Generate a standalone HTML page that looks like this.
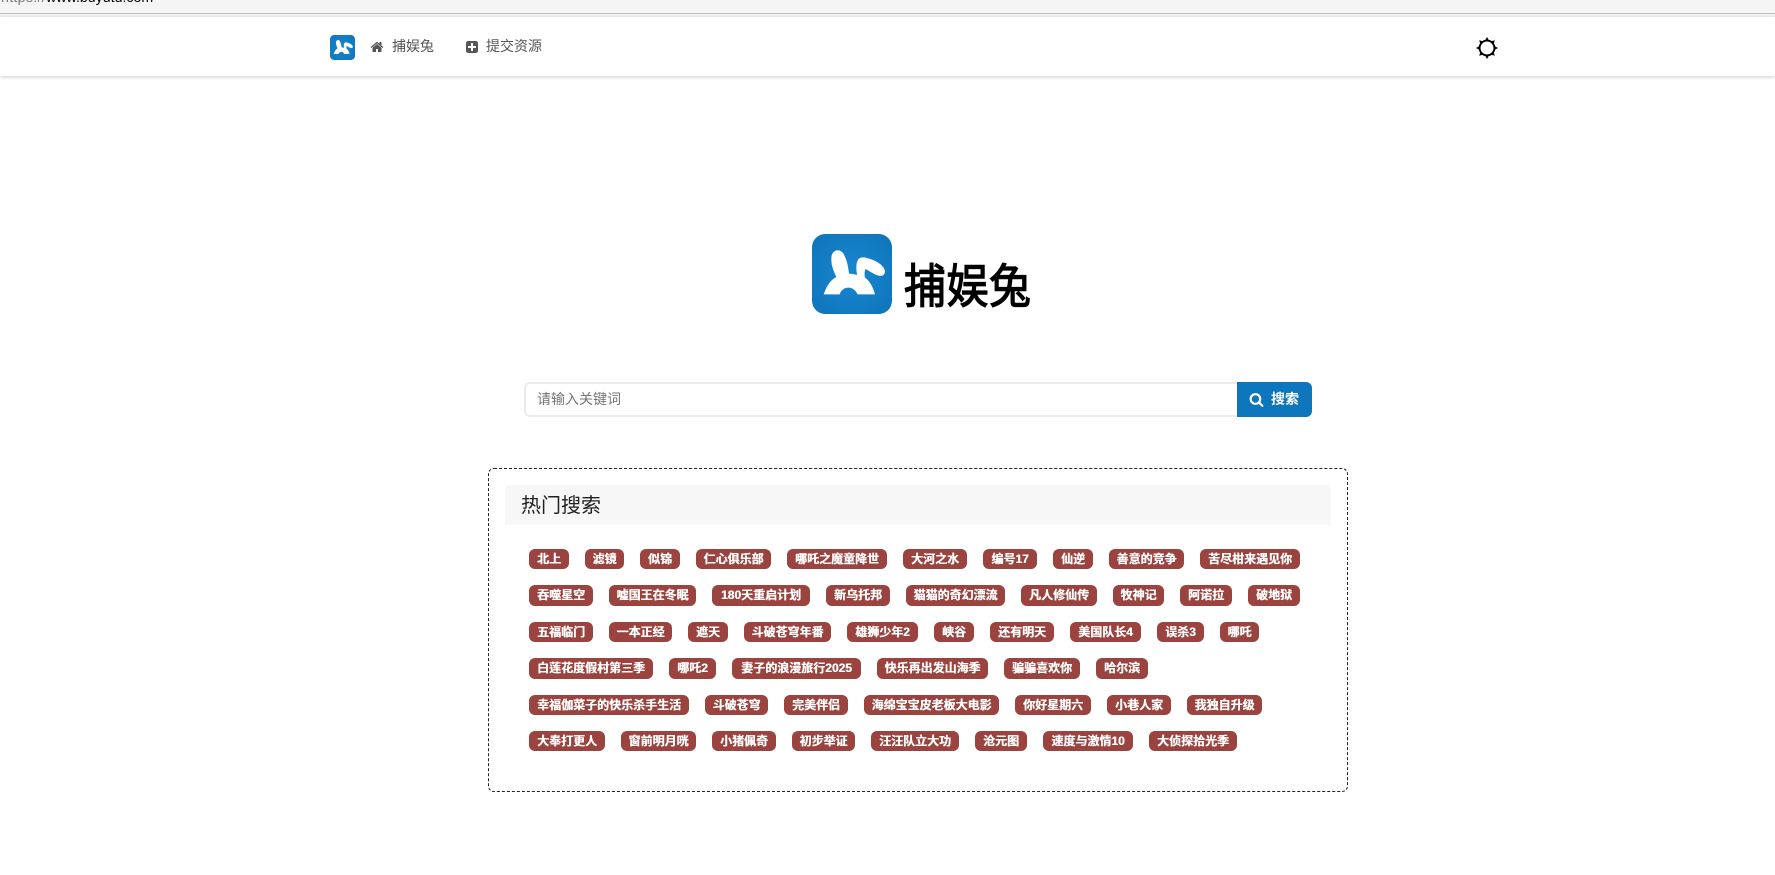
<!DOCTYPE html>
<html lang="zh-CN">
<head>
<meta charset="utf-8">
<title>捕娱兔</title>
<style>
html,body{margin:0;padding:0;background:#fff;width:1775px;height:875px;overflow:hidden}
body{position:relative;font-family:"Liberation Sans","Noto Sans CJK SC",sans-serif;color:#555}
.a{position:absolute}
.bar{left:0;top:0;width:1775px;height:13px;background:#f5f5f5;overflow:hidden}
.url{position:absolute;left:1px;top:-12px;font-size:14.2px;line-height:20px;white-space:nowrap;color:#000}
.url span{color:#777;letter-spacing:.3px}
.line{left:0;top:13px;width:1775px;height:1px;background:#bdbdbd}
.strip{left:0;top:14px;width:1775px;height:3px;background:#f3f3f3}
.nav{left:0;top:17px;width:1775px;height:59px;background:#fff;box-shadow:0 1px 4px rgba(0,0,0,.2)}
.nt{font-size:14px;line-height:20px;color:#555;white-space:nowrap}
.brand{font-family:"Noto Sans CJK SC","WenQuanYi Zen Hei",sans-serif;font-weight:400;font-size:42px;line-height:60px;color:#000;white-space:nowrap;-webkit-text-stroke:1.1px #000;transform:scaleY(1.12);transform-origin:50% 50%;letter-spacing:.5px}
.input{left:524px;top:382px;width:712px;height:31px;border:2px solid #ececec;border-right:0;border-radius:6px 0 0 6px;background:#fff}
.ph{left:537px;top:389px;font-size:14px;line-height:20px;color:#757575;white-space:nowrap}
.btn{left:1237px;top:382px;width:75px;height:35px;background:#0e76bc;border-radius:0 6px 6px 0}
.btxt{left:1271px;top:389px;font-size:14px;line-height:20px;color:#fff;font-weight:700;white-space:nowrap}
.box{left:488px;top:468px;width:858px;height:322px;border:1px dashed #222;border-radius:6px}
.title{left:505px;top:485px;width:826px;height:40px;background:#f7f7f7;border-radius:5px 5px 0 0}
.ttxt{left:521px;top:491px;font-size:20px;line-height:30px;color:#222;white-space:nowrap}
.t{position:absolute;height:20px;line-height:20px;background:#9b433f;color:#fff;font-size:12px;font-weight:700;text-align:center;border-radius:6px;white-space:nowrap;text-shadow:.4px 0 0 #fff}
.r2{height:21px;line-height:21px}
</style>
</head>
<body>
<div class="a bar"><div class="url"><span>https://</span>www.buyutu.com</div></div>
<div class="a line"></div>
<div class="a strip"></div>
<div class="a nav"></div>

<svg class="a" style="left:330px;top:35px" width="25" height="25" viewBox="-9 -3 240 240">
<defs><radialGradient id="g1" cx="50%" cy="50%" r="70%"><stop offset="0" stop-color="#1887d0"/><stop offset="1" stop-color="#0e74ba"/></radialGradient></defs>
<rect x="-9" y="-3" width="240" height="240" rx="40" fill="url(#g1)"/>
<path d="M26 178C36 150 48 134 64 126C54 104 46 84 50 62C54 44 74 40 84 54C96 72 100 98 102 116C110 116 118 118 126 120C124 104 122 88 128 76C134 64 150 66 166 72C182 78 200 86 208 102C214 116 204 126 190 122C176 118 164 108 152 102C148 110 148 120 150 128C164 138 174 156 180 178L128 178C122 166 112 158 100 158C88 158 78 166 74 178Z" fill="#fff"/>
</svg>
<svg class="a" style="left:370px;top:40px" width="14" height="14" viewBox="0 0 1792 1792"><path fill="#555" d="M1472 992v480q0 26-19 45t-45 19h-384v-384h-256v384h-384q-26 0-45-19t-19-45v-480q0-1 .5-3t.5-3l575-474 575 474q1 2 1 6zm223-69l-62 74q-8 9-21 11h-3q-13 0-21-7l-692-577-692 577q-12 8-24 7-13-2-21-11l-62-74q-8-10-7-23.500t11-21.500l719-599q32-26 76-26t76 26l244 204v-195q0-14 9-23t23-9h192q14 0 23 9t9 23v408l219 182q10 8 11 21.500t-7 23.500z"/></svg>
<div class="a nt" style="left:392px;top:36px">捕娱兔</div>
<svg class="a" style="left:465px;top:40px" width="14" height="14" viewBox="0 0 1792 1792"><path fill="#555" d="M1408 960v-128q0-26-19-45t-45-19h-320v-320q0-26-19-45t-45-19h-128q-26 0-45 19t-19 45v320h-320q-26 0-45 19t-19 45v128q0 26 19 45t45 19h320v320q0 26 19 45t45 19h128q26 0 45-19t19-45v-320h320q26 0 45-19t19-45zm256-544v960q0 119-84.500 203.500t-203.500 84.500h-960q-119 0-203.500-84.500t-84.500-203.500v-960q0-119 84.500-203.500t203.500-84.500h960q119 0 203.500 84.500t84.500 203.500z"/></svg>
<div class="a nt" style="left:486px;top:36px">提交资源</div>

<svg class="a" style="left:1476px;top:37px" width="22" height="22" viewBox="-11 -11 22 22">
<circle cx="0" cy="0" r="7.400" fill="none" stroke="#000" stroke-width="1.900"/>
<g fill="#000"><polygon points="-1.800,-7.800 1.800,-7.800 0,-11"/><polygon points="-1.800,-7.800 1.800,-7.800 0,-11" transform="rotate(45)"/><polygon points="-1.800,-7.800 1.800,-7.800 0,-11" transform="rotate(90)"/><polygon points="-1.800,-7.800 1.800,-7.800 0,-11" transform="rotate(135)"/><polygon points="-1.800,-7.800 1.800,-7.800 0,-11" transform="rotate(180)"/><polygon points="-1.800,-7.800 1.800,-7.800 0,-11" transform="rotate(225)"/><polygon points="-1.800,-7.800 1.800,-7.800 0,-11" transform="rotate(270)"/><polygon points="-1.800,-7.800 1.800,-7.800 0,-11" transform="rotate(315)"/></g>
</svg>

<svg class="a" style="left:812px;top:234px" width="80" height="80" viewBox="-9 -3 240 240">
<defs><radialGradient id="g2" cx="50%" cy="50%" r="70%"><stop offset="0" stop-color="#1887d0"/><stop offset="1" stop-color="#0e74ba"/></radialGradient></defs>
<rect x="-9" y="-3" width="240" height="240" rx="40" fill="url(#g2)"/>
<path d="M26 178C36 150 48 134 64 126C54 104 46 84 50 62C54 44 74 40 84 54C96 72 100 98 102 116C110 116 118 118 126 120C124 104 122 88 128 76C134 64 150 66 166 72C182 78 200 86 208 102C214 116 204 126 190 122C176 118 164 108 152 102C148 110 148 120 150 128C164 138 174 156 180 178L128 178C122 166 112 158 100 158C88 158 78 166 74 178Z" fill="#fff"/>
</svg>
<div class="a brand" style="left:904px;top:254px">捕娱兔</div>

<div class="a input"></div>
<div class="a ph">请输入关键词</div>
<div class="a btn"></div>
<svg class="a" style="left:1249px;top:392px" width="15" height="15" viewBox="0 0 1792 1792"><path fill="#fff" d="M1216 832q0-185-131.500-316.500t-316.500-131.500-316.500 131.500-131.500 316.500 131.500 316.500 316.500 131.500 316.500-131.500 131.500-316.500zm512 832q0 52-38 90t-90 38q-54 0-90-38l-343-342q-179 124-399 124-143 0-273.500-55.500t-225-150-150-225-55.500-273.500 55.500-273.500 150-225 225-150 273.500-55.500 273.500 55.500 225 150 150 225 55.500 273.500q0 220-124 399l343 343q37 37 37 90z"/></svg>
<div class="a btxt">搜索</div>

<div class="a box"></div>
<div class="a title"></div>
<div class="a ttxt">热门搜索</div>

<div class="t" style="top:549px;left:529px;width:40px">北上</div>
<div class="t" style="top:549px;left:585px;width:39px">滤镜</div>
<div class="t" style="top:549px;left:640px;width:40px">似锦</div>
<div class="t" style="top:549px;left:696px;width:75px">仁心俱乐部</div>
<div class="t" style="top:549px;left:787px;width:100px">哪吒之魔童降世</div>
<div class="t" style="top:549px;left:903px;width:64px">大河之水</div>
<div class="t" style="top:549px;left:983px;width:54px">编号17</div>
<div class="t" style="top:549px;left:1053px;width:40px">仙逆</div>
<div class="t" style="top:549px;left:1109px;width:75px">善意的竞争</div>
<div class="t" style="top:549px;left:1200px;width:100px">苦尽柑来遇见你</div>

<div class="t r2" style="top:585px;left:529px;width:64px">吞噬星空</div>
<div class="t r2" style="top:585px;left:609px;width:87px">嘘国王在冬眠</div>
<div class="t r2" style="top:585px;left:712px;width:98px">180天重启计划</div>
<div class="t r2" style="top:585px;left:826px;width:64px">新乌托邦</div>
<div class="t r2" style="top:585px;left:906px;width:99px">猫猫的奇幻漂流</div>
<div class="t r2" style="top:585px;left:1021px;width:76px">凡人修仙传</div>
<div class="t r2" style="top:585px;left:1113px;width:51px">牧神记</div>
<div class="t r2" style="top:585px;left:1180px;width:52px">阿诺拉</div>
<div class="t r2" style="top:585px;left:1248px;width:52px">破地狱</div>

<div class="t" style="top:622px;left:529px;width:64px">五福临门</div>
<div class="t" style="top:622px;left:609px;width:63px">一本正经</div>
<div class="t" style="top:622px;left:688px;width:40px">遮天</div>
<div class="t" style="top:622px;left:744px;width:87px">斗破苍穹年番</div>
<div class="t" style="top:622px;left:847px;width:71px">雄狮少年2</div>
<div class="t" style="top:622px;left:934px;width:40px">峡谷</div>
<div class="t" style="top:622px;left:990px;width:64px">还有明天</div>
<div class="t" style="top:622px;left:1070px;width:71px">美国队长4</div>
<div class="t" style="top:622px;left:1157px;width:47px">误杀3</div>
<div class="t" style="top:622px;left:1220px;width:39px">哪吒</div>

<div class="t r2" style="top:658px;left:529px;width:124px">白莲花度假村第三季</div>
<div class="t r2" style="top:658px;left:669px;width:47px">哪吒2</div>
<div class="t r2" style="top:658px;left:732px;width:129px">妻子的浪漫旅行2025</div>
<div class="t r2" style="top:658px;left:877px;width:111px">快乐再出发山海季</div>
<div class="t r2" style="top:658px;left:1004px;width:76px">骗骗喜欢你</div>
<div class="t r2" style="top:658px;left:1096px;width:52px">哈尔滨</div>

<div class="t" style="top:695px;left:529px;width:160px">幸福伽菜子的快乐杀手生活</div>
<div class="t" style="top:695px;left:705px;width:63px">斗破苍穹</div>
<div class="t" style="top:695px;left:784px;width:64px">完美伴侣</div>
<div class="t" style="top:695px;left:864px;width:135px">海绵宝宝皮老板大电影</div>
<div class="t" style="top:695px;left:1015px;width:76px">你好星期六</div>
<div class="t" style="top:695px;left:1107px;width:64px">小巷人家</div>
<div class="t" style="top:695px;left:1187px;width:75px">我独自升级</div>

<div class="t" style="top:731px;left:529px;width:76px">大奉打更人</div>
<div class="t" style="top:731px;left:621px;width:75px">窗前明月咣</div>
<div class="t" style="top:731px;left:712px;width:64px">小猪佩奇</div>
<div class="t" style="top:731px;left:792px;width:63px">初步举证</div>
<div class="t" style="top:731px;left:871px;width:88px">汪汪队立大功</div>
<div class="t" style="top:731px;left:975px;width:52px">沧元图</div>
<div class="t" style="top:731px;left:1043px;width:90px">速度与激情10</div>
<div class="t" style="top:731px;left:1149px;width:88px">大侦探拾光季</div>
</body>
</html>
